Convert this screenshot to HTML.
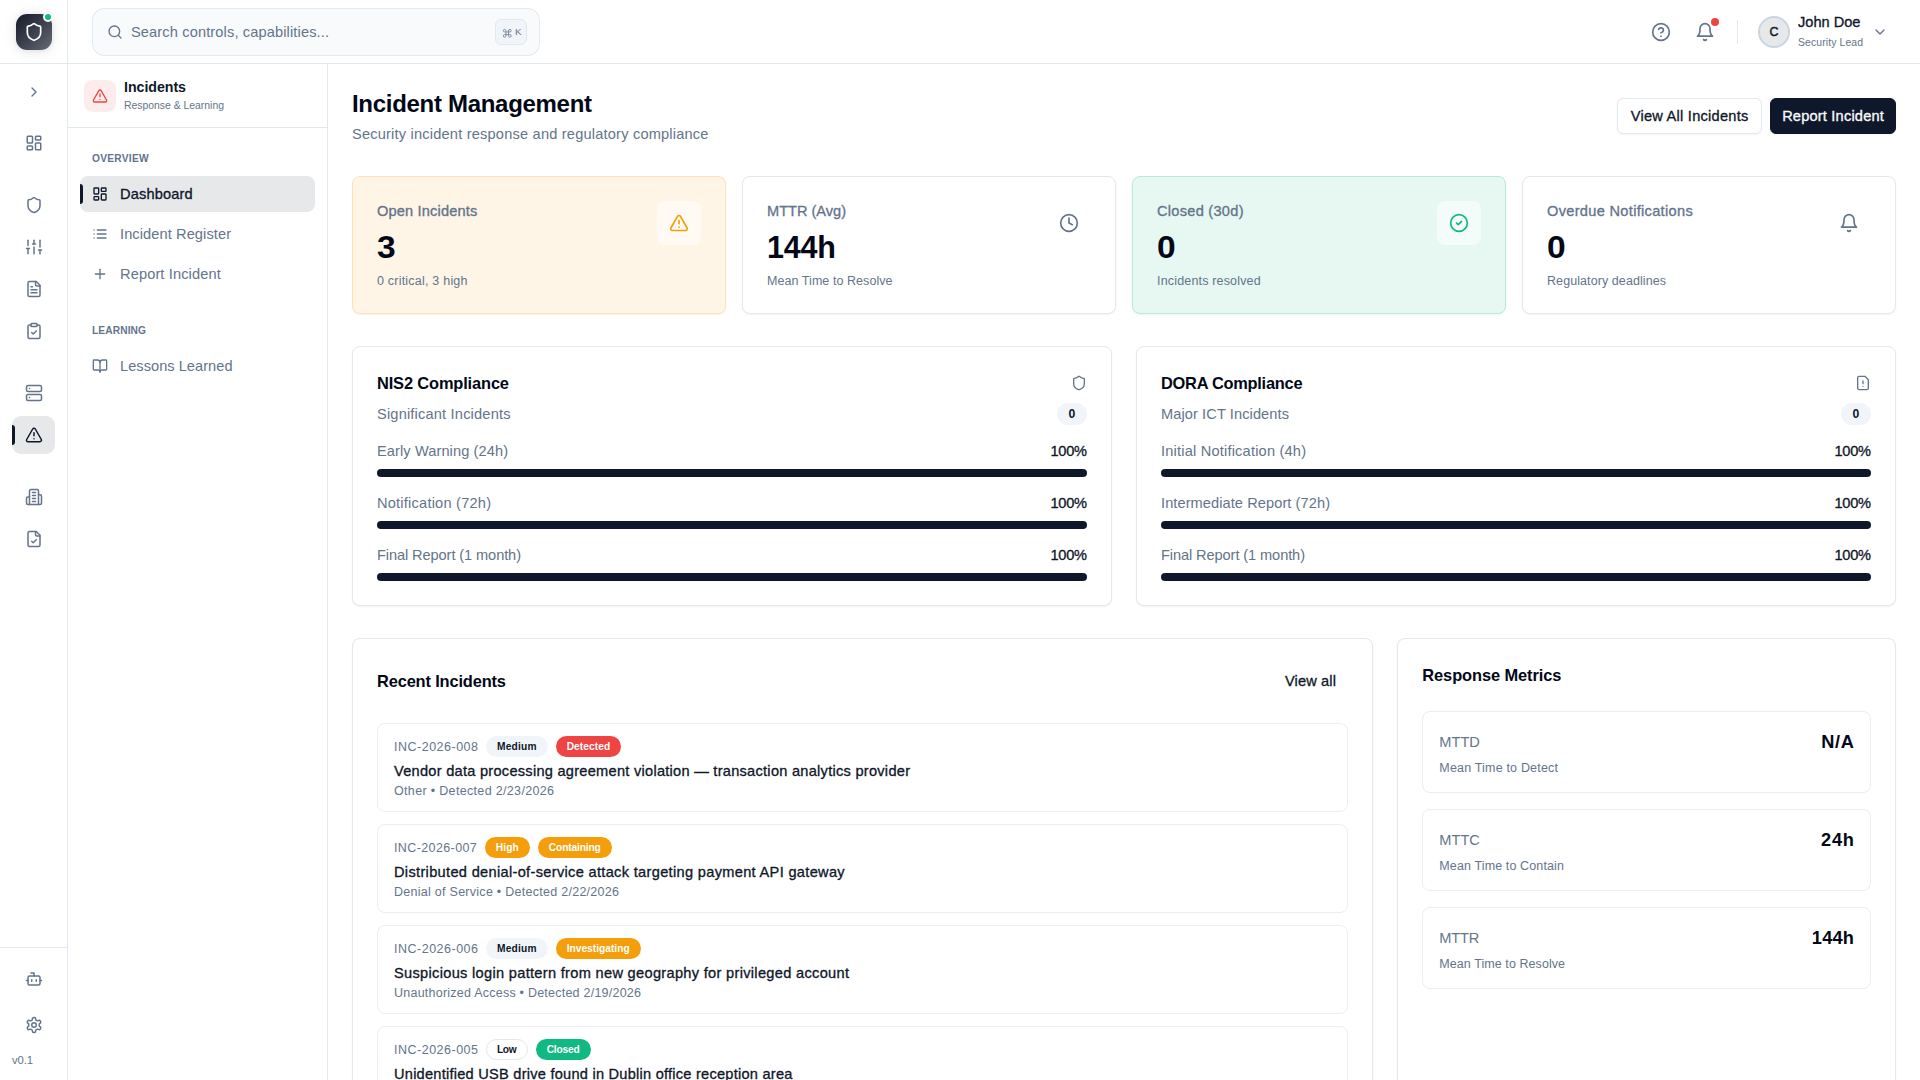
<!DOCTYPE html>
<html lang="en"><head><meta charset="utf-8"><title>Incident Management</title>
<style>
*{box-sizing:border-box;margin:0;padding:0}
html,body{width:1920px;height:1080px;overflow:hidden;background:#fff}
body{font-family:"Liberation Sans",sans-serif;color:#0f172a;position:relative;-webkit-font-smoothing:antialiased}
span{white-space:nowrap}
i{display:block;font-style:normal}
.ic{display:block;flex:none}
#hdr{position:absolute;left:0;top:0;width:1920px;height:64px;border-bottom:1px solid #e2e8f0;background:#fff}
#logo{position:absolute;left:16px;top:14px;width:36px;height:36px;border-radius:11px;background:linear-gradient(135deg,#151a2a 0%,#3b404e 50%,#686b73 100%);box-shadow:0 1px 14px rgba(15,23,42,.11),0 1px 4px rgba(15,23,42,.07);color:#fff}
#logo .ic{position:absolute;left:8px;top:8px}
#ldot{position:absolute;left:27px;top:-2px;width:10px;height:10px;border-radius:50%;background:#10b981;border:2px solid #fff}
#search{position:absolute;left:92px;top:8px;width:448px;height:48px;border:1px solid #e2e8f0;border-radius:12px;background:#f8fafc;color:#64748b}
#search .sic{position:absolute;left:14px;top:15px}
.sph{position:absolute;left:38px;top:13px;font-size:14.6px;line-height:20px}
#kbd{position:absolute;left:402px;top:10px;width:32px;height:26px;border:1px solid #e2e8f0;border-radius:6px;background:#f1f5f9;color:#64748b}
#kbd .ic{position:absolute;left:5.5px;top:7.5px}
#kbd span{position:absolute;left:19px;top:6px;font-size:9.8px;line-height:12px}
#hr{color:#64748b}
#hr .ic{position:absolute}
#rdot{position:absolute;left:1711px;top:18px;width:8px;height:8px;border-radius:50%;background:#ef4444}
#hdiv{position:absolute;left:1737px;top:20px;width:1px;height:24px;background:#e2e8f0}
#ava{position:absolute;left:1758px;top:16px;width:32px;height:32px;border-radius:50%;background:#e7e8ea;border:2px solid #cbd5e1;color:#0f172a;-webkit-text-stroke:.45px currentColor;font-size:12.4px;line-height:28px;text-align:center}
#uname{position:absolute;left:1798px;top:12px;font-size:14.6px;line-height:20px;color:#0f172a}
#urole{position:absolute;left:1798px;top:36px;font-size:10.4px;line-height:14px;color:#64748b}

#rail{position:absolute;left:0;top:0;width:68px;height:1080px;border-right:1px solid #e2e8f0;color:#64748b}
#rail>*{position:absolute}
.ri{left:12px;width:43px;padding-left:1px;height:38px;border-radius:9px;display:flex;align-items:center;justify-content:center}
.ri.act{background:#e7e8ea;color:#0f172a}
.ri .abar{position:absolute;left:0;top:9px;width:3px;height:20px;border-radius:0 3px 3px 0;background:#0f172a}
#rdiv{left:0;top:947px;width:67px;height:1px;background:#e2e8f0}
#ver{left:12px;top:1052px;font-size:11.3px;line-height:16px}

#side{position:absolute;left:68px;top:64px;width:260px;height:1016px;border-right:1px solid #e2e8f0;background:#fff}
#side>*{position:absolute;margin-top:-64px;margin-left:-68px}
#sh{left:0;top:0;width:259px;height:64px;border-bottom:1px solid #e2e8f0;margin:0!important}
#sh>*{position:absolute}
#shi{left:16px;top:16px;width:32px;height:32px;border-radius:8px;background:#fdecec;color:#ef4444;display:flex;align-items:center;justify-content:center}
#sht{left:56px;top:13px;font-size:14.2px;font-weight:700;line-height:20px}
#shs{left:56px;top:35px;font-size:10.4px;line-height:14px;color:#64748b}
.nl{left:92px;font-size:10.2px;font-weight:700;line-height:16px;color:#64748b}
.ni{left:80px;width:235px;height:36px;border-radius:8px;color:#64748b;font-size:14.6px;line-height:20px}
.ni .ic{position:absolute;left:12px;top:10px}
.ni span{position:absolute;left:40px;top:8px}
.ni.act{background:#e7e8ea;color:#0f172a}
.ni .abar{position:absolute;left:0;top:8px;width:3px;height:20px;border-radius:0 3px 3px 0;background:#0f172a}

#main>*{position:absolute}
#h1{left:352px;top:88px;font-size:24px;font-weight:700;line-height:32px;color:#020817}
#h2{left:352px;top:124px;font-size:14.6px;line-height:20px;color:#64748b}
.btn{top:98px;height:36px;border-radius:6px;font-size:14.6px;line-height:34px;text-align:center;border:1px solid #e2e8f0;background:#fff;color:#0f172a;box-shadow:0 1px 2px rgba(0,0,0,.04)}
.btn.pri{background:#0f172a;border-color:#0f172a;color:#f8fafc}

.card{border:1px solid #e2e8f0;border-radius:8px;background:#fff;box-shadow:0 1px 2px rgba(15,23,42,.05)}
.card>*{position:absolute}
.stat{top:176px;width:374px;height:138px}
.stat.amber{background:#fef5e7;border-color:#fce2b6}
.stat.green{background:#e7f8f2;border-color:#b7ead9}
.sl{left:24px;top:24px;font-size:14.6px;line-height:20px;color:#64748b}
.sn{left:24px;top:52px;font-size:30.5px;font-weight:700;line-height:36px;color:#020817}
.ss{left:24px;top:96px;font-size:12.5px;line-height:16px;color:#64748b}
.sib{left:304px;top:24px;width:44px;height:44px;border-radius:8px;display:flex;align-items:center;justify-content:center}
.sib.amb{background:rgba(255,255,255,.5);color:#f59e0b}
.sib.grn{background:rgba(255,255,255,.5);color:#10b981}
.sib.mut{color:#64748b}

.comp{top:346px;width:760px;height:260px}
.ct{left:24px;top:24px;font-size:16.4px;font-weight:700;line-height:24px;color:#020817}
.comp .cti{position:absolute;left:694px;top:4px;color:#64748b}
.crow0{left:24px;top:56px;width:710px;height:22px;display:flex;justify-content:space-between;align-items:center;font-size:14.6px;line-height:20px;color:#64748b}
.cnt{display:block;width:30px;height:22px;border-radius:11px;background:#f1f5f9;color:#0f172a;font-size:12.2px;font-weight:700;line-height:22px;text-align:center}
.crow{left:24px;width:710px;height:36px}
.crow:nth-of-type(3){top:94px}.crow:nth-of-type(4){top:146px}.crow:nth-of-type(5){top:198px}
.cl{display:flex;justify-content:space-between;font-size:14.6px;line-height:20px;color:#64748b}
.pct{color:#0f172a}
.bar{margin-top:8px;height:8px;border-radius:4px;background:#0f172a}

#recent{left:352px;top:638px;width:1021.33px;height:700px}
#rt{left:24px;top:24px;font-size:16.4px;font-weight:700;line-height:36px;color:#020817}
#rva{left:932px;top:24px;font-size:14.6px;line-height:36px;color:#0f172a}
.inc{left:24px;width:971.33px;height:89px;border:1px solid #eaeef4;border-radius:8px}
.inc>*{position:absolute;left:16px}
.ir{top:12px;height:21px;display:flex;align-items:center;gap:8px}
.iid{font-size:12.5px;line-height:16px;color:#64748b;margin-right:0}
.bdg{display:block;height:21px;padding:0 11px;border-radius:11px;font-size:10.2px;font-weight:700;line-height:21px}
.bdg.sec{background:#f1f5f9;color:#0f172a}
.bdg.red{background:#ef4444;color:#fff}
.bdg.org{background:#f59e0b;color:#fff}
.bdg.grnb{background:#10b981;color:#fff}
.bdg.outl{background:#fff;color:#0f172a;border:1px solid #e2e8f0;padding:0 10px;line-height:19px}
.it{top:37px;font-size:14.6px;line-height:20px;color:#0f172a}
.is{top:59px;font-size:12.5px;line-height:16px;color:#64748b}

#metrics{left:1397.33px;top:638px;width:498.67px;height:700px}
#mt{left:24px;top:24px;font-size:16.4px;font-weight:700;line-height:24px;color:#020817}
.met{left:24px;width:448.67px;height:82px;border:1px solid #eaeef4;border-radius:8px;padding:16px}
.mr{height:28px;display:flex;justify-content:space-between;align-items:center}
.ml{font-size:14.6px;line-height:20px;color:#64748b}
.mv{font-size:18.2px;font-weight:700;line-height:28px;color:#020817}
.ms{margin-top:4px;font-size:12.5px;line-height:16px;color:#64748b}

.btn,.sl,.pct,.it,#uname,.ni.act span,#rva{-webkit-text-stroke:.32px currentColor}
.wide{display:inline-block;transform:scaleX(1.1);transform-origin:0 50%}

</style></head><body>

<div id="hdr">
  <div id="logo"><svg class="ic " width="20" height="20" viewBox="0 0 24 24" fill="none" stroke="currentColor" stroke-width="2" stroke-linecap="round" stroke-linejoin="round"><path d="M20 13c0 5-3.5 7.5-7.66 8.95a1 1 0 0 1-.67-.01C7.5 20.5 4 18 4 13V6a1 1 0 0 1 1-1c2 0 4.5-1.2 6.24-2.72a1.17 1.17 0 0 1 1.52 0C14.51 3.81 17 5 19 5a1 1 0 0 1 1 1z"/></svg><i id="ldot"></i></div>
  <div id="search"><svg class="ic sic" width="16" height="16" viewBox="0 0 24 24" fill="none" stroke="currentColor" stroke-width="2" stroke-linecap="round" stroke-linejoin="round"><circle cx="11" cy="11" r="8"/><path d="m21 21-4.3-4.3"/></svg><span class="sph" style="letter-spacing:0.133px;margin-right:-0.133px">Search controls, capabilities...</span><span id="kbd"><svg class="ic " width="10.5" height="10.5" viewBox="0 0 24 24" fill="none" stroke="currentColor" stroke-width="1.7" stroke-linecap="round" stroke-linejoin="round"><path d="M15 6v12a3 3 0 1 0 3-3H6a3 3 0 1 0 3 3V6a3 3 0 1 0-3 3h12a3 3 0 1 0-3-3"/></svg><span>K</span></span></div>
  <div id="hr">
    <svg class="ic " width="20" height="20" viewBox="0 0 24 24" fill="none" stroke="currentColor" stroke-width="2" stroke-linecap="round" stroke-linejoin="round" style="left:1651px;top:22px"><circle cx="12" cy="12" r="10"/><path d="M9.09 9a3 3 0 0 1 5.83 1c0 2-3 3-3 3"/><path d="M12 17h.01"/></svg>
    <svg class="ic " width="20" height="20" viewBox="0 0 24 24" fill="none" stroke="currentColor" stroke-width="2" stroke-linecap="round" stroke-linejoin="round" style="left:1695px;top:22px"><path d="M6 8a6 6 0 0 1 12 0c0 7 3 9 3 9H3s3-2 3-9"/><path d="M10.3 21a1.94 1.94 0 0 0 3.4 0"/></svg>
    <i id="rdot"></i>
    <i id="hdiv"></i>
    <div id="ava"><span>C</span></div>
    <div id="uname"><span style="letter-spacing:-0.012px;margin-right:0.012px">John Doe</span></div>
    <div id="urole"><span style="letter-spacing:0.121px;margin-right:-0.121px">Security Lead</span></div>
    <svg class="ic " width="16" height="16" viewBox="0 0 24 24" fill="none" stroke="currentColor" stroke-width="2" stroke-linecap="round" stroke-linejoin="round" style="left:1872px;top:24px"><path d="m6 9 6 6 6-6"/></svg>
  </div>
</div>

<div id="rail">
  <div class="ri" style="top:73px"><svg class="ic " width="16" height="16" viewBox="0 0 24 24" fill="none" stroke="currentColor" stroke-width="2" stroke-linecap="round" stroke-linejoin="round"><path d="m9 18 6-6-6-6"/></svg></div>
  <div class="ri" style="top:124px"><svg class="ic " width="18" height="18" viewBox="0 0 24 24" fill="none" stroke="currentColor" stroke-width="2" stroke-linecap="round" stroke-linejoin="round"><rect width="7" height="9" x="3" y="3" rx="1"/><rect width="7" height="5" x="14" y="3" rx="1"/><rect width="7" height="9" x="14" y="12" rx="1"/><rect width="7" height="5" x="3" y="16" rx="1"/></svg></div>
  <div class="ri" style="top:186px"><svg class="ic " width="18" height="18" viewBox="0 0 24 24" fill="none" stroke="currentColor" stroke-width="2" stroke-linecap="round" stroke-linejoin="round"><path d="M20 13c0 5-3.5 7.5-7.66 8.95a1 1 0 0 1-.67-.01C7.5 20.5 4 18 4 13V6a1 1 0 0 1 1-1c2 0 4.5-1.2 6.24-2.72a1.17 1.17 0 0 1 1.52 0C14.51 3.81 17 5 19 5a1 1 0 0 1 1 1z"/></svg></div>
  <div class="ri" style="top:228px"><svg class="ic " width="18" height="18" viewBox="0 0 24 24" fill="none" stroke="currentColor" stroke-width="2" stroke-linecap="round" stroke-linejoin="round"><line x1="4" x2="4" y1="21" y2="14"/><line x1="4" x2="4" y1="10" y2="3"/><line x1="12" x2="12" y1="21" y2="12"/><line x1="12" x2="12" y1="8" y2="3"/><line x1="20" x2="20" y1="21" y2="16"/><line x1="20" x2="20" y1="12" y2="3"/><line x1="2" x2="6" y1="14" y2="14"/><line x1="10" x2="14" y1="8" y2="8"/><line x1="18" x2="22" y1="16" y2="16"/></svg></div>
  <div class="ri" style="top:270px"><svg class="ic " width="18" height="18" viewBox="0 0 24 24" fill="none" stroke="currentColor" stroke-width="2" stroke-linecap="round" stroke-linejoin="round"><path d="M15 2H6a2 2 0 0 0-2 2v16a2 2 0 0 0 2 2h12a2 2 0 0 0 2-2V7Z"/><path d="M14 2v4a2 2 0 0 0 2 2h4"/><path d="M10 9H8"/><path d="M16 13H8"/><path d="M16 17H8"/></svg></div>
  <div class="ri" style="top:312px"><svg class="ic " width="18" height="18" viewBox="0 0 24 24" fill="none" stroke="currentColor" stroke-width="2" stroke-linecap="round" stroke-linejoin="round"><rect width="8" height="4" x="8" y="2" rx="1" ry="1"/><path d="M16 4h2a2 2 0 0 1 2 2v14a2 2 0 0 1-2 2H6a2 2 0 0 1-2-2V6a2 2 0 0 1 2-2h2"/><path d="m9 14 2 2 4-4"/></svg></div>
  <div class="ri" style="top:374px"><svg class="ic " width="18" height="18" viewBox="0 0 24 24" fill="none" stroke="currentColor" stroke-width="2" stroke-linecap="round" stroke-linejoin="round"><rect width="20" height="8" x="2" y="2" rx="2" ry="2"/><rect width="20" height="8" x="2" y="14" rx="2" ry="2"/><line x1="6" x2="6.01" y1="6" y2="6"/><line x1="6" x2="6.01" y1="18" y2="18"/></svg></div>
  <div class="ri act" style="top:416px"><i class="abar"></i><svg class="ic " width="18" height="18" viewBox="0 0 24 24" fill="none" stroke="currentColor" stroke-width="2" stroke-linecap="round" stroke-linejoin="round"><path d="m21.73 18-8-14a2 2 0 0 0-3.48 0l-8 14A2 2 0 0 0 4 21h16a2 2 0 0 0 1.73-3"/><path d="M12 9v4"/><path d="M12 17h.01"/></svg></div>
  <div class="ri" style="top:478px"><svg class="ic " width="18" height="18" viewBox="0 0 24 24" fill="none" stroke="currentColor" stroke-width="2" stroke-linecap="round" stroke-linejoin="round"><path d="M6 22V4a2 2 0 0 1 2-2h8a2 2 0 0 1 2 2v18Z"/><path d="M6 12H4a2 2 0 0 0-2 2v6a2 2 0 0 0 2 2h2"/><path d="M18 9h2a2 2 0 0 1 2 2v9a2 2 0 0 1-2 2h-2"/><path d="M10 6h4"/><path d="M10 10h4"/><path d="M10 14h4"/><path d="M10 18h4"/></svg></div>
  <div class="ri" style="top:520px"><svg class="ic " width="18" height="18" viewBox="0 0 24 24" fill="none" stroke="currentColor" stroke-width="2" stroke-linecap="round" stroke-linejoin="round"><path d="M15 2H6a2 2 0 0 0-2 2v16a2 2 0 0 0 2 2h12a2 2 0 0 0 2-2V7Z"/><path d="M14 2v4a2 2 0 0 0 2 2h4"/><path d="m9 15 2 2 4-4"/></svg></div>
  <div id="rdiv"></div>
  <div class="ri" style="top:960px"><svg class="ic " width="18" height="18" viewBox="0 0 24 24" fill="none" stroke="currentColor" stroke-width="2" stroke-linecap="round" stroke-linejoin="round"><path d="M12 8V4H8"/><rect width="16" height="12" x="4" y="8" rx="2"/><path d="M2 14h2"/><path d="M20 14h2"/><path d="M15 13v2"/><path d="M9 13v2"/></svg></div>
  <div class="ri" style="top:1006px"><svg class="ic " width="18" height="18" viewBox="0 0 24 24" fill="none" stroke="currentColor" stroke-width="2" stroke-linecap="round" stroke-linejoin="round"><path d="M12.22 2h-.44a2 2 0 0 0-2 2v.18a2 2 0 0 1-1 1.73l-.43.25a2 2 0 0 1-2 0l-.15-.08a2 2 0 0 0-2.73.73l-.22.38a2 2 0 0 0 .73 2.73l.15.1a2 2 0 0 1 1 1.72v.51a2 2 0 0 1-1 1.74l-.15.09a2 2 0 0 0-.73 2.73l.22.38a2 2 0 0 0 2.73.73l.15-.08a2 2 0 0 1 2 0l.43.25a2 2 0 0 1 1 1.73V20a2 2 0 0 0 2 2h.44a2 2 0 0 0 2-2v-.18a2 2 0 0 1 1-1.73l.43-.25a2 2 0 0 1 2 0l.15.08a2 2 0 0 0 2.73-.73l.22-.39a2 2 0 0 0-.73-2.73l-.15-.08a2 2 0 0 1-1-1.74v-.5a2 2 0 0 1 1-1.74l.15-.09a2 2 0 0 0 .73-2.73l-.22-.38a2 2 0 0 0-2.73-.73l-.15.08a2 2 0 0 1-2 0l-.43-.25a2 2 0 0 1-1-1.73V4a2 2 0 0 0-2-2z"/><circle cx="12" cy="12" r="3"/></svg></div>
  <div id="ver"><span style="letter-spacing:-0.120px;margin-right:0.120px">v0.1</span></div>
</div>

<div id="side">
  <div id="sh">
    <div id="shi"><svg class="ic " width="16" height="16" viewBox="0 0 24 24" fill="none" stroke="currentColor" stroke-width="2" stroke-linecap="round" stroke-linejoin="round"><path d="m21.73 18-8-14a2 2 0 0 0-3.48 0l-8 14A2 2 0 0 0 4 21h16a2 2 0 0 0 1.73-3"/><path d="M12 9v4"/><path d="M12 17h.01"/></svg></div>
    <div id="sht"><span style="letter-spacing:-0.035px;margin-right:0.035px">Incidents</span></div>
    <div id="shs"><span style="letter-spacing:0.003px;margin-right:-0.003px">Response &amp; Learning</span></div>
  </div>
  <div class="nl" style="top:151px"><span style="letter-spacing:0.267px;margin-right:-0.267px">OVERVIEW</span></div>
  <div class="ni act" style="top:176px"><i class="abar"></i><svg class="ic " width="16" height="16" viewBox="0 0 24 24" fill="none" stroke="currentColor" stroke-width="2" stroke-linecap="round" stroke-linejoin="round"><rect width="7" height="9" x="3" y="3" rx="1"/><rect width="7" height="5" x="14" y="3" rx="1"/><rect width="7" height="9" x="14" y="12" rx="1"/><rect width="7" height="5" x="3" y="16" rx="1"/></svg><span style="letter-spacing:0.162px;margin-right:-0.162px">Dashboard</span></div>
  <div class="ni" style="top:216px"><svg class="ic " width="16" height="16" viewBox="0 0 24 24" fill="none" stroke="currentColor" stroke-width="2" stroke-linecap="round" stroke-linejoin="round"><line x1="8" x2="21" y1="6" y2="6"/><line x1="8" x2="21" y1="12" y2="12"/><line x1="8" x2="21" y1="18" y2="18"/><line x1="3" x2="3.01" y1="6" y2="6"/><line x1="3" x2="3.01" y1="12" y2="12"/><line x1="3" x2="3.01" y1="18" y2="18"/></svg><span style="letter-spacing:0.093px;margin-right:-0.093px">Incident Register</span></div>
  <div class="ni" style="top:256px"><svg class="ic " width="16" height="16" viewBox="0 0 24 24" fill="none" stroke="currentColor" stroke-width="2" stroke-linecap="round" stroke-linejoin="round"><path d="M5 12h14"/><path d="M12 5v14"/></svg><span style="letter-spacing:0.123px;margin-right:-0.123px">Report Incident</span></div>
  <div class="nl" style="top:323px"><span style="letter-spacing:0.114px;margin-right:-0.114px">LEARNING</span></div>
  <div class="ni" style="top:348px"><svg class="ic " width="16" height="16" viewBox="0 0 24 24" fill="none" stroke="currentColor" stroke-width="2" stroke-linecap="round" stroke-linejoin="round"><path d="M12 7v14"/><path d="M3 18a1 1 0 0 1-1-1V4a1 1 0 0 1 1-1h5a4 4 0 0 1 4 4 4 4 0 0 1 4-4h5a1 1 0 0 1 1 1v13a1 1 0 0 1-1 1h-6a3 3 0 0 0-3 3 3 3 0 0 0-3-3z"/></svg><span style="letter-spacing:0.038px;margin-right:-0.038px">Lessons Learned</span></div>
</div>

<div id="main">
  <div id="h1"><span style="letter-spacing:-0.299px;margin-right:0.299px">Incident Management</span></div>
  <div id="h2"><span style="letter-spacing:0.198px;margin-right:-0.198px">Security incident response and regulatory compliance</span></div>
  <div class="btn out" style="left:1617px;width:145px"><span style="letter-spacing:0.252px;margin-right:-0.252px">View All Incidents</span></div>
  <div class="btn pri" style="left:1770px;width:126px"><span style="letter-spacing:0.194px;margin-right:-0.194px">Report Incident</span></div>

  <div class="card stat amber" style="left:352px">
  <div class="sl"><span style="letter-spacing:0.171px;margin-right:-0.171px">Open Incidents</span></div>
  <div class="sn"><span class="wide">3</span></div>
  <div class="ss"><span style="letter-spacing:0.214px;margin-right:-0.214px">0 critical, 3 high</span></div>
  <div class="sib amb"><svg class="ic " width="20" height="20" viewBox="0 0 24 24" fill="none" stroke="currentColor" stroke-width="2" stroke-linecap="round" stroke-linejoin="round"><path d="m21.73 18-8-14a2 2 0 0 0-3.48 0l-8 14A2 2 0 0 0 4 21h16a2 2 0 0 0 1.73-3"/><path d="M12 9v4"/><path d="M12 17h.01"/></svg></div>
</div>
  <div class="card stat " style="left:742px">
  <div class="sl"><span style="letter-spacing:-0.021px;margin-right:0.021px">MTTR (Avg)</span></div>
  <div class="sn"><span style="letter-spacing:-0.177px;margin-right:0.177px">144h</span></div>
  <div class="ss"><span style="letter-spacing:0.060px;margin-right:-0.060px">Mean Time to Resolve</span></div>
  <div class="sib mut"><svg class="ic " width="20" height="20" viewBox="0 0 24 24" fill="none" stroke="currentColor" stroke-width="2" stroke-linecap="round" stroke-linejoin="round"><circle cx="12" cy="12" r="10"/><polyline points="12 6 12 12 16 14"/></svg></div>
</div>
  <div class="card stat green" style="left:1132px">
  <div class="sl"><span style="letter-spacing:0.267px;margin-right:-0.267px">Closed (30d)</span></div>
  <div class="sn"><span class="wide">0</span></div>
  <div class="ss"><span style="letter-spacing:0.173px;margin-right:-0.173px">Incidents resolved</span></div>
  <div class="sib grn"><svg class="ic " width="20" height="20" viewBox="0 0 24 24" fill="none" stroke="currentColor" stroke-width="2" stroke-linecap="round" stroke-linejoin="round"><circle cx="12" cy="12" r="10"/><path d="m9 12 2 2 4-4"/></svg></div>
</div>
  <div class="card stat " style="left:1522px">
  <div class="sl"><span style="letter-spacing:0.308px;margin-right:-0.308px">Overdue Notifications</span></div>
  <div class="sn"><span class="wide">0</span></div>
  <div class="ss"><span style="letter-spacing:0.081px;margin-right:-0.081px">Regulatory deadlines</span></div>
  <div class="sib mut"><svg class="ic " width="20" height="20" viewBox="0 0 24 24" fill="none" stroke="currentColor" stroke-width="2" stroke-linecap="round" stroke-linejoin="round"><path d="M6 8a6 6 0 0 1 12 0c0 7 3 9 3 9H3s3-2 3-9"/><path d="M10.3 21a1.94 1.94 0 0 0 3.4 0"/></svg></div>
</div>

  <div class="card comp" style="left:352px"><div class="ct"><span style="letter-spacing:-0.136px;margin-right:0.136px">NIS2 Compliance</span><svg class="ic cti" width="16" height="16" viewBox="0 0 24 24" fill="none" stroke="currentColor" stroke-width="2" stroke-linecap="round" stroke-linejoin="round"><path d="M20 13c0 5-3.5 7.5-7.66 8.95a1 1 0 0 1-.67-.01C7.5 20.5 4 18 4 13V6a1 1 0 0 1 1-1c2 0 4.5-1.2 6.24-2.72a1.17 1.17 0 0 1 1.52 0C14.51 3.81 17 5 19 5a1 1 0 0 1 1 1z"/></svg></div><div class="crow0"><span style="letter-spacing:0.184px;margin-right:-0.184px">Significant Incidents</span><span class="cnt"><span>0</span></span></div><div class="crow"><div class="cl"><span style="letter-spacing:0.098px;margin-right:-0.098px">Early Warning (24h)</span><span class="pct" style="letter-spacing:-0.243px;margin-right:0.243px">100%</span></div><div class="bar"></div></div><div class="crow"><div class="cl"><span style="letter-spacing:0.216px;margin-right:-0.216px">Notification (72h)</span><span class="pct" style="letter-spacing:-0.243px;margin-right:0.243px">100%</span></div><div class="bar"></div></div><div class="crow"><div class="cl"><span style="letter-spacing:-0.095px;margin-right:0.095px">Final Report (1 month)</span><span class="pct" style="letter-spacing:-0.243px;margin-right:0.243px">100%</span></div><div class="bar"></div></div></div>
  <div class="card comp" style="left:1136px"><div class="ct"><span style="letter-spacing:-0.258px;margin-right:0.258px">DORA Compliance</span><svg class="ic cti" width="16" height="16" viewBox="0 0 24 24" fill="none" stroke="currentColor" stroke-width="2" stroke-linecap="round" stroke-linejoin="round"><path d="M15 2H6a2 2 0 0 0-2 2v16a2 2 0 0 0 2 2h12a2 2 0 0 0 2-2V7Z"/><path d="M12 9v4"/><path d="M12 17h.01"/></svg></div><div class="crow0"><span style="letter-spacing:0.096px;margin-right:-0.096px">Major ICT Incidents</span><span class="cnt"><span>0</span></span></div><div class="crow"><div class="cl"><span style="letter-spacing:0.195px;margin-right:-0.195px">Initial Notification (4h)</span><span class="pct" style="letter-spacing:-0.243px;margin-right:0.243px">100%</span></div><div class="bar"></div></div><div class="crow"><div class="cl"><span style="letter-spacing:0.079px;margin-right:-0.079px">Intermediate Report (72h)</span><span class="pct" style="letter-spacing:-0.243px;margin-right:0.243px">100%</span></div><div class="bar"></div></div><div class="crow"><div class="cl"><span style="letter-spacing:-0.095px;margin-right:0.095px">Final Report (1 month)</span><span class="pct" style="letter-spacing:-0.243px;margin-right:0.243px">100%</span></div><div class="bar"></div></div></div>

  <div class="card" id="recent">
    <div id="rt"><span style="letter-spacing:-0.145px;margin-right:0.145px">Recent Incidents</span></div>
    <div id="rva"><span style="letter-spacing:0.138px;margin-right:-0.138px">View all</span></div>
    <div class="inc" style="top:84px">
  <div class="ir"><span class="iid" style="letter-spacing:0.499px;margin-right:-0.499px">INC-2026-008</span><span class="bdg sec"><span style="letter-spacing:0.220px;margin-right:-0.220px">Medium</span></span><span class="bdg red"><span style="letter-spacing:0.067px;margin-right:-0.067px">Detected</span></span></div>
  <div class="it"><span style="letter-spacing:0.264px;margin-right:-0.264px">Vendor data processing agreement violation — transaction analytics provider</span></div>
  <div class="is"><span style="letter-spacing:0.332px;margin-right:-0.332px">Other • Detected 2/23/2026</span></div>
</div>
    <div class="inc" style="top:185px">
  <div class="ir"><span class="iid" style="letter-spacing:0.389px;margin-right:-0.389px">INC-2026-007</span><span class="bdg org"><span style="letter-spacing:0.120px;margin-right:-0.120px">High</span></span><span class="bdg org"><span style="letter-spacing:-0.134px;margin-right:0.134px">Containing</span></span></div>
  <div class="it"><span style="letter-spacing:0.319px;margin-right:-0.319px">Distributed denial-of-service attack targeting payment API gateway</span></div>
  <div class="is"><span style="letter-spacing:0.272px;margin-right:-0.272px">Denial of Service • Detected 2/22/2026</span></div>
</div>
    <div class="inc" style="top:286px">
  <div class="ir"><span class="iid" style="letter-spacing:0.499px;margin-right:-0.499px">INC-2026-006</span><span class="bdg sec"><span style="letter-spacing:0.220px;margin-right:-0.220px">Medium</span></span><span class="bdg org"><span style="letter-spacing:0.013px;margin-right:-0.013px">Investigating</span></span></div>
  <div class="it"><span style="letter-spacing:0.310px;margin-right:-0.310px">Suspicious login pattern from new geography for privileged account</span></div>
  <div class="is"><span style="letter-spacing:0.234px;margin-right:-0.234px">Unauthorized Access • Detected 2/19/2026</span></div>
</div>
    <div class="inc" style="top:387px">
  <div class="ir"><span class="iid" style="letter-spacing:0.499px;margin-right:-0.499px">INC-2026-005</span><span class="bdg outl"><span style="letter-spacing:-0.387px;margin-right:0.387px">Low</span></span><span class="bdg grnb"><span style="letter-spacing:-0.194px;margin-right:0.194px">Closed</span></span></div>
  <div class="it"><span style="letter-spacing:0.240px;margin-right:-0.240px">Unidentified USB drive found in Dublin office reception area</span></div>
  <div class="is"><span style="letter-spacing:0.389px;margin-right:-0.389px">Physical Security • Detected 2/15/2026</span></div>
</div>
  </div>

  <div class="card" id="metrics">
    <div id="mt"><span style="letter-spacing:-0.085px;margin-right:0.085px">Response Metrics</span></div>
    <div class="met" style="top:72px">
  <div class="mr"><span class="ml"><span style="letter-spacing:-0.010px;margin-right:0.010px">MTTD</span></span><span class="mv"><span style="letter-spacing:0.686px;margin-right:-0.686px">N/A</span></span></div>
  <div class="ms"><span style="letter-spacing:0.182px;margin-right:-0.182px">Mean Time to Detect</span></div>
</div>
    <div class="met" style="top:170px">
  <div class="mr"><span class="ml"><span style="letter-spacing:-0.010px;margin-right:0.010px">MTTC</span></span><span class="mv"><span style="letter-spacing:0.828px;margin-right:-0.828px">24h</span></span></div>
  <div class="ms"><span style="letter-spacing:0.121px;margin-right:-0.121px">Mean Time to Contain</span></div>
</div>
    <div class="met" style="top:268px">
  <div class="mr"><span class="ml"><span style="letter-spacing:-0.177px;margin-right:0.177px">MTTR</span></span><span class="mv"><span style="letter-spacing:0.244px;margin-right:-0.244px">144h</span></span></div>
  <div class="ms"><span style="letter-spacing:0.071px;margin-right:-0.071px">Mean Time to Resolve</span></div>
</div>
  </div>
</div>

</body></html>
